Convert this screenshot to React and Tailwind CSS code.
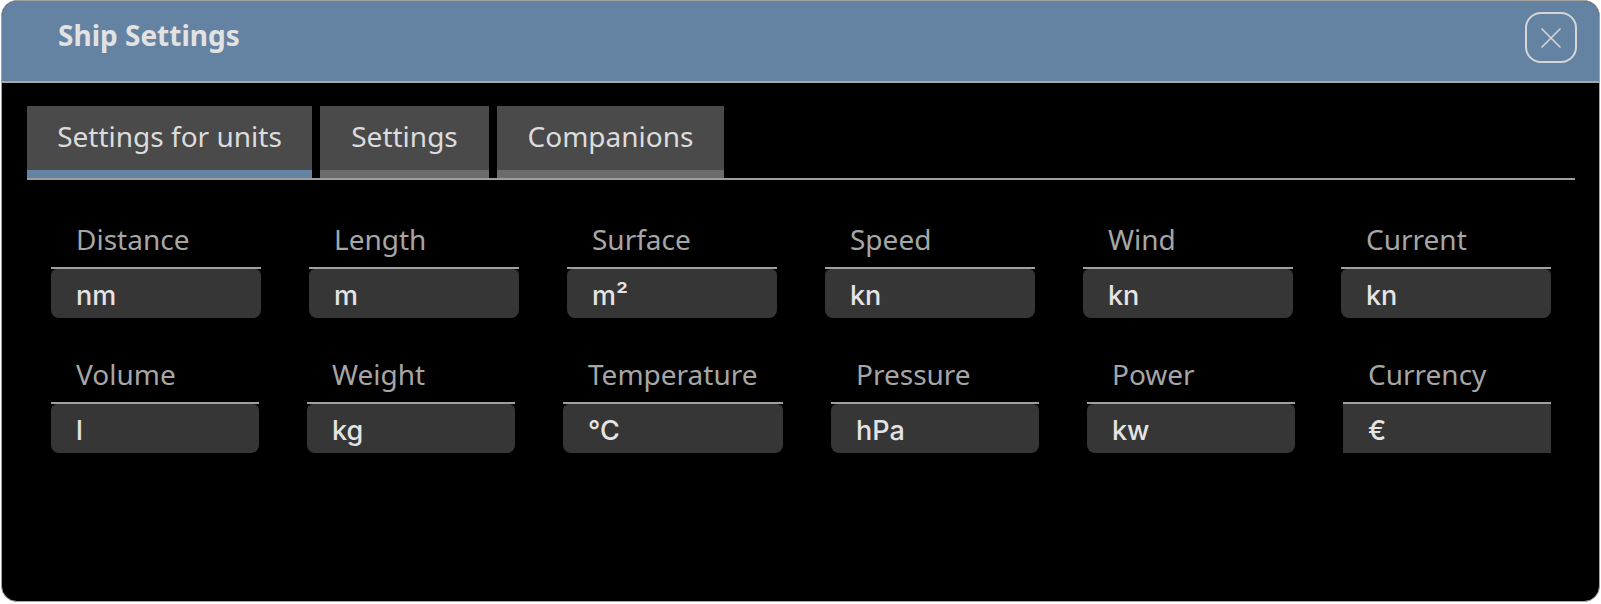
const labelFont = { fontFamily: '"Noto Sans", "Open Sans", sans-serif' };

const rowOne = [
  { label: 'Distance', value: 'nm' },
  { label: 'Length', value: 'm' },
  { label: 'Surface', value: 'm²' },
  { label: 'Speed', value: 'kn' },
  { label: 'Wind', value: 'kn' },
  { label: 'Current', value: 'kn' },
];

const rowTwo = [
  { label: 'Volume', value: 'l' },
  { label: 'Weight', value: 'kg' },
  { label: 'Temperature', value: '°C' },
  { label: 'Pressure', value: 'hPa' },
  { label: 'Power', value: 'kw' },
  { label: 'Currency', value: '€', square: true },
];

const tabs = [
  { name: 'Settings for units', width: 'w-[285px]', active: true },
  { name: 'Settings', width: 'w-[169px]' },
  { name: 'Companions', width: 'w-[227px]' },
];

function UnitField({ label, value, square }) {
  return (
    <div className="flex flex-col min-w-0">
      <div className="pl-[25px] text-[28px] leading-[32px] text-[#a6a6a6] whitespace-nowrap" style={labelFont}>
        {label}
      </div>
      <div className="mt-[12px] h-[2px] bg-[#a0a0a0]" />
      <div
        className={
          'h-[49px] bg-[#363636] pl-[25px] pt-[13px] text-[27px] leading-[27px] font-medium text-[#e4e4e4] font-[Inter,sans-serif] ' +
          (square ? 'rounded-none' : 'rounded-b-[8px] rounded-t-[6px]')
        }
      >
        {value}
      </div>
    </div>
  );
}

export default function App() {
  return (
    <div className="w-[1601px] h-[604px] bg-white">
      <div className="ml-[1px] w-[1599px] h-[602px] rounded-[16px] border border-[#a3a3a3] bg-black overflow-hidden">
        {/* header */}
        <div className="h-[82px] bg-[#6483a3] border-b-2 border-[#a8a8a8] flex justify-between items-start pl-[56px] pr-[22px]">
          <h1 className="pt-[18px] text-[28px] leading-[32px] font-bold text-[#e2e2e2]" style={labelFont}>
            Ship Settings
          </h1>
          <button className="mt-[11px] w-[52px] h-[51px] rounded-[16px] border-2 border-[#d6d6d6] flex items-center justify-center">
            <svg width="20" height="20" viewBox="0 0 20 20" fill="none" stroke="#d6d6d6" strokeWidth="1.6" strokeLinecap="round">
              <path d="M1 1 L19 19 M19 1 L1 19" />
            </svg>
          </button>
        </div>

        <div className="pl-[25px] pr-[24px]">
          {/* tabs */}
          <div className="mt-[23px] flex gap-[8px] border-b-2 border-[#9e9e9e]">
            {tabs.map((t) => (
              <div key={t.name} className={'flex flex-col ' + t.width}>
                <div
                  className="h-[64px] bg-[#4a4a4a] pt-[14px] text-center text-[28px] leading-[32px] text-[#dcdcdc] whitespace-nowrap"
                  style={labelFont}
                >
                  {t.name}
                </div>
                <div className={'h-[8px] ' + (t.active ? 'bg-[#6483a3]' : 'bg-[#6b6b6b]')} />
              </div>
            ))}
          </div>

          {/* unit fields */}
          <div className="ml-[24px] mt-[43px] w-[1500px]">
            <div className="grid grid-cols-[repeat(6,210px)] gap-x-[48px]">
              {rowOne.map((f) => (
                <UnitField key={f.label} {...f} />
              ))}
            </div>
            <div className="mt-[40px] grid grid-cols-[208px_208px_220px_208px_208px_208px] gap-x-[48px]">
              {rowTwo.map((f) => (
                <UnitField key={f.label} {...f} />
              ))}
            </div>
          </div>
        </div>
      </div>
    </div>
  );
}
